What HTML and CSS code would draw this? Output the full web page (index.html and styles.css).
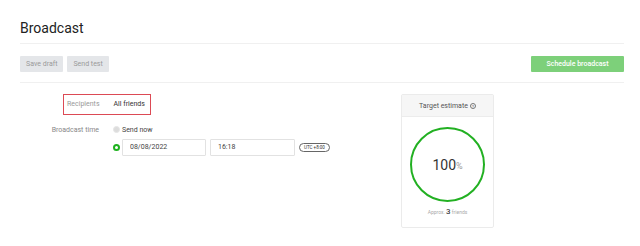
FILE: index.html
```html
<!DOCTYPE html>
<html lang="en">
<head>
    <meta charset="UTF-8">
    <meta name="viewport" content="width=device-width, initial-scale=1.0">
    <link rel="stylesheet" href="styles.css">
    <title>Broadcast</title>
</head>
<body>
    <div class="page">
        <h1 class="title">Broadcast</h1>
        <div class="toolbar">
            <div class="toolbar-left">
                <button class="btn">Save draft</button>
                <button class="btn">Send test</button>
            </div>
            <button class="btn btn-green">Schedule broadcast</button>
        </div>
        <div class="content">
            <div class="form">
                <div class="recipients">
                    <span class="recipients-label">Recipients</span>
                    <span class="recipients-value">All friends</span>
                </div>
                <div class="time-row">
                    <div class="row-label">Broadcast time</div>
                    <div class="time-options">
                        <label class="option">
                            <span class="radio"></span>
                            <span>Send now</span>
                        </label>
                        <div class="option">
                            <span class="radio radio-on"></span>
                            <input class="input input-date" type="text" value="08/08/2022">
                            <input class="input input-time" type="text" value="16:18">
                            <span class="utc">UTC +8:00</span>
                        </div>
                    </div>
                </div>
            </div>
            <div class="card">
                <div class="card-head">Target estimate <span class="help">?</span></div>
                <div class="card-body">
                    <div class="ring">
                        <span class="ring-num">100</span><span class="ring-pct">%</span>
                    </div>
                    <div class="approx">Approx. <b>3</b> friends</div>
                </div>
            </div>
        </div>
    </div>
</body>
</html>
```

FILE: styles.css
```css
*{
    box-sizing: border-box;
}
body{
    margin: 0;
    font-family: Roboto, "Liberation Sans", sans-serif;
    color: #333;
    background: #fff;
}
.page{
    padding: 0 16px 0 20px;
}
.title{
    margin: 0;
    padding-top: 18px;
    padding-bottom: 5px;
    font-size: 14px;
    line-height: 20px;
    font-weight: 400;
    color: #222;
    border-bottom: 1px solid #f0f0f0;
}
.toolbar{
    display: flex;
    justify-content: space-between;
    align-items: center;
    padding: 12px 0 10px;
    border-bottom: 1px solid #f0f0f0;
}
.toolbar-left{
    display: flex;
    gap: 4px;
}
.btn{
    height: 16px;
    padding: 0 6px;
    border: none;
    border-radius: 1px;
    background: #e4e6e9;
    color: #9a9a9a;
    font-family: Roboto, sans-serif;
    font-size: 7px;
}
.btn-green{
    width: 93px;
    background: #7dd07a;
    color: #fff;
    font-weight: 500;
}
.content{
    display: flex;
}
.form{
    width: 381px;
    padding-top: 8px;
}
.recipients{
    display: inline-flex;
    align-items: center;
    gap: 14px;
    height: 21px;
    margin-left: 43px;
    padding: 0 5px 0 3px;
    border: 1px solid #dc4a55;
    font-size: 7px;
}
.recipients-label{
    color: #999;
}
.recipients-value{
    color: #333;
}
.time-row{
    display: flex;
    margin-top: 8px;
    font-size: 7px;
}
.row-label{
    width: 79px;
    margin-right: 14px;
    text-align: right;
    line-height: 14px;
    color: #888;
}
.time-options{
    display: flex;
    flex-direction: column;
    gap: 2px;
}
.option{
    display: flex;
    align-items: center;
    gap: 2px;
    height: 14px;
    color: #444;
}
.option + .option{
    height: 17px;
}
.radio{
    width: 7px;
    height: 7px;
    border-radius: 50%;
    background: #dcdcdc;
    border: 1px solid #e6e6e6;
}
.radio-on{
    background: #fff;
    border: 2px solid #1fb21f;
}
.input{
    height: 17px;
    width: 84px;
    padding: 0 7px;
    border: 1px solid #e2e2e2;
    border-radius: 1px;
    font-family: Roboto, sans-serif;
    font-size: 7px;
    color: #444;
    outline: none;
}
.input-time{
    width: 85px;
    margin-left: 2px;
}
.utc{
    margin-left: 2px;
    height: 9px;
    padding: 0 4px;
    border: 1px solid #666;
    border-radius: 5px;
    font-size: 4.5px;
    line-height: 7px;
    color: #333;
}
.card{
    width: 93px;
    margin-top: 11px;
    border: 1px solid #ebebeb;
    border-radius: 2px;
    height: 134px;
}
.card-head{
    height: 22px;
    display: flex;
    align-items: center;
    justify-content: center;
    gap: 2px;
    background: #f6f6f6;
    border-bottom: 1px solid #ececec;
    font-size: 7px;
    color: #555;
}
.help{
    width: 6px;
    height: 6px;
    border: 0.6px solid #777;
    border-radius: 50%;
    font-size: 4px;
    line-height: 5px;
    text-align: center;
}
.card-body{
    display: flex;
    flex-direction: column;
    align-items: center;
    padding-top: 10px;
}
.ring{
    width: 75px;
    height: 75px;
    border: 2px solid #22b022;
    border-radius: 50%;
    display: flex;
    align-items: center;
    justify-content: center;
}
.ring-num{
    font-size: 14px;
    color: #333;
}
.ring-pct{
    font-size: 9px;
    color: #999;
    margin-top: 3px;
}
.approx{
    margin-top: 5px;
    font-size: 5px;
    color: #aaa;
}
.approx b{
    font-size: 8px;
    font-weight: 500;
    color: #444;
}
```
